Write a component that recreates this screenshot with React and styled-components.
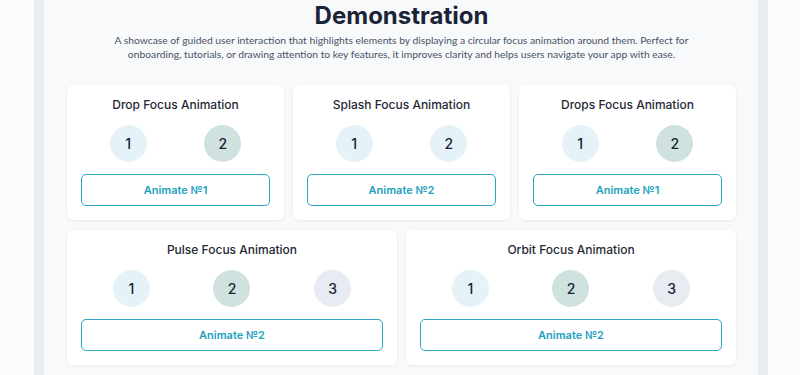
import React from "react";
import styled, { createGlobalStyle } from "styled-components";

const GlobalStyle = createGlobalStyle`
  body {
    margin: 0;
    background: #fbfcfd;
    font-family: Inter, "Liberation Sans", sans-serif;
  }
`;

const Frame = styled.div`
  margin: 0 32px 0 34px;
  min-height: 100vh;
  border-left: 10px solid #e8edf1;
  border-right: 10px solid #e8edf1;
  background: #f8f9fb;
  padding: 1px 22px 40px 23px;
  box-sizing: border-box;
`;

const Heading = styled.h1`
  margin: 0;
  text-align: center;
  font-family: Inter, "Liberation Sans", sans-serif;
  font-size: 24px;
  line-height: 29px;
  font-weight: 700;
  color: #1b2337;
`;

const Description = styled.p`
  margin: 3px auto 0;
  max-width: 590px;
  text-align: center;
  font-family: Lato, "Liberation Sans", sans-serif;
  font-size: 10.3px;
  line-height: 14px;
  color: #475266;
`;

const Grid = styled.div`
  margin-top: 24px;
  display: grid;
  grid-template-columns: repeat(6, 1fr);
  gap: 10px 9px;
`;

const Card = styled.div`
  grid-column: span ${(p) => p.$span};
  background: #fff;
  border-radius: 6px;
  box-shadow: 0 1px 3px rgba(20, 30, 50, 0.07);
  padding: 12px 14px 14px;
  display: flex;
  flex-direction: column;
`;

const CardTitle = styled.div`
  text-align: center;
  font-size: 12px;
  line-height: 16px;
  font-weight: 500;
  color: #1f2937;
  margin-bottom: 12px;
`;

const Circles = styled.div`
  display: flex;
  justify-content: space-around;
  margin-bottom: 12px;
`;

const tones = {
  blue: "#e5f3f8",
  green: "#cfe2df",
  grey: "#e8ecf2",
};

const Circle = styled.div`
  width: 37px;
  height: 37px;
  border-radius: 50%;
  background: ${(p) => tones[p.$tone]};
  display: flex;
  align-items: center;
  justify-content: center;
  font-size: 14px;
  font-weight: 500;
  color: #1a2233;
`;

const AnimateButton = styled.button`
  height: 32px;
  border: 1.5px solid #2aa6c4;
  border-radius: 5px;
  background: #fff;
  color: #22a0c0;
  font-family: Inter, "Liberation Sans", sans-serif;
  font-size: 11px;
  font-weight: 600;
  cursor: pointer;
`;

const demos = [
  { title: "Drop Focus Animation", span: 2, circles: ["blue", "green"], label: "Animate №1" },
  { title: "Splash Focus Animation", span: 2, circles: ["blue", "blue"], label: "Animate №2" },
  { title: "Drops Focus Animation", span: 2, circles: ["blue", "green"], label: "Animate №1" },
  { title: "Pulse Focus Animation", span: 3, circles: ["blue", "green", "grey"], label: "Animate №2" },
  { title: "Orbit Focus Animation", span: 3, circles: ["blue", "green", "grey"], label: "Animate №2" },
];

const App = () => {
  return (
    <>
      <GlobalStyle />
      <Frame>
        <Heading>Demonstration</Heading>
        <Description>
          A showcase of guided user interaction that highlights elements by
          displaying a circular focus animation around them. Perfect for
          onboarding, tutorials, or drawing attention to key features, it
          improves clarity and helps users navigate your app with ease.
        </Description>
        <Grid>
          {demos.map((demo) => (
            <Card key={demo.title} $span={demo.span}>
              <CardTitle>{demo.title}</CardTitle>
              <Circles>
                {demo.circles.map((tone, i) => (
                  <Circle key={i} $tone={tone}>
                    {i + 1}
                  </Circle>
                ))}
              </Circles>
              <AnimateButton>{demo.label}</AnimateButton>
            </Card>
          ))}
        </Grid>
      </Frame>
    </>
  );
};

export default App;
